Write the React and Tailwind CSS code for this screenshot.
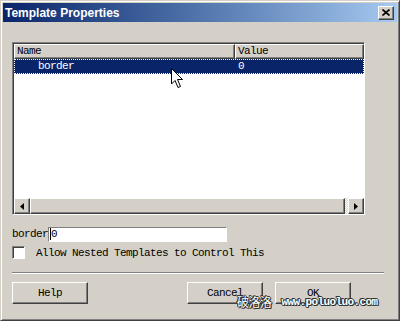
import React from "react";

const mono = "font-['Liberation_Mono','DejaVu_Sans_Mono',monospace] text-[11px] tracking-[-0.6px]";
const raised =
  "bg-[#d4d0c8] border border-t-white border-l-white border-b-[#404040] border-r-[#404040] shadow-[inset_-1px_-1px_0_#808080]";

const Arrow = ({ dir }) => (
  <div className={`w-[16px] h-[16px] flex items-center justify-center ${raised}`}>
    <svg width="4" height="7" viewBox="0 0 4 7">
      {dir === "left" ? <path d="M4 0 L0 3.5 L4 7 Z" fill="#000" /> : <path d="M0 0 L4 3.5 L0 7 Z" fill="#000" />}
    </svg>
  </div>
);

const Button = ({ label, className = "" }) => (
  <button className={`w-[76px] h-[22px] ${raised} ${mono} text-black ${className}`}>{label}</button>
);

export default function App() {
  return (
    <div className="relative w-[400px] h-[321px] bg-[#d4d0c8] border border-t-[#d4d0c8] border-l-[#d4d0c8] border-b-[#404040] border-r-[#404040] shadow-[inset_1px_1px_0_#fff,inset_-1px_-1px_0_#808080] overflow-hidden">
      {/* title bar */}
      <div className="mx-[2px] mt-[2px] h-[19px] flex items-center justify-between bg-gradient-to-r from-[#0a246a] to-[#a6caf0] pl-[2px] pr-[3px]">
        <span className="font-['Liberation_Sans',Arial,sans-serif] font-bold text-[12px] text-white">Template Properties</span>
        <div className={`w-[16px] h-[14px] flex items-center justify-center ${raised}`}>
          <svg width="8" height="7" viewBox="0 0 8 7">
            <path d="M0.5 0.5 L7.5 6.5 M7.5 0.5 L0.5 6.5" stroke="#000" strokeWidth="1.6" />
          </svg>
        </div>
      </div>

      <div className="px-[11px] pt-[20px]">
        {/* list view */}
        <div className="w-[353px] h-[173px] flex flex-col border border-t-[#808080] border-l-[#808080] border-b-white border-r-white shadow-[inset_1px_1px_0_#404040]">
          <div className="flex flex-col flex-1 ml-[1px] mt-[1px] bg-white">
            <div className={`flex h-[15px] ${mono}`}>
              <div className={`w-[221px] pl-[2px] leading-[12px] ${raised}`}>Name</div>
              <div className={`flex-1 pl-[2px] leading-[12px] ${raised}`}>Value</div>
            </div>
            <div className={`flex h-[15px] bg-[#0a246a] text-white outline outline-1 outline-dotted outline-white -outline-offset-1 ${mono}`}>
              <div className="w-[221px] pl-[24px] leading-[14px]">border</div>
              <div className="flex-1 pl-[3px] leading-[14px]">0</div>
            </div>
            <div className="flex-1" />
            <div className="flex h-[16px]">
              <Arrow dir="left" />
              <div className={`flex-1 ${raised}`} />
              <div className="w-[3px] bg-[repeating-conic-gradient(#fff_0_25%,#d4d0c8_0_50%)] bg-[length:2px_2px]" />
              <Arrow dir="right" />
            </div>
          </div>
        </div>

        {/* border field */}
        <div className={`flex items-center mt-[11px] ${mono}`}>
          <span className="w-[36px]">border</span>
          <div className="w-[179px] h-[15px] bg-white border border-t-[#808080] border-l-[#808080] border-b-white border-r-white leading-[13px] pl-[1px]">
            <span className="border-l border-black">0</span>
          </div>
        </div>

        <div className={`flex items-center mt-[2px] ${mono}`}>
          <div className="w-[13px] h-[13px] bg-white border border-t-[#808080] border-l-[#808080] border-b-white border-r-white shadow-[inset_1px_1px_0_#404040]" />
          <span className="ml-[11px]">Allow Nested Templates to Control This</span>
        </div>

        <div className="mt-[11px] w-[372px] h-[2px] border-t border-t-[#808080] border-b border-b-white" />

        <div className="flex mt-[8px]">
          <Button label="Help" />
          <Button label="Cancel" className="ml-[99px]" />
          <Button label="OK" className="ml-[12px]" />
        </div>
      </div>

      {/* mouse cursor */}
      <svg className="absolute left-[170px] top-[67px]" width="14" height="22" viewBox="0 0 14 22">
        <path d="M0.5 0.5 L0.5 16 L4 12.5 L7 19.5 L9.5 18.5 L6.5 11.5 L11.5 11.5 Z" fill="#fff" stroke="#000" strokeWidth="1" />
      </svg>

      {/* watermark */}
      <div className="absolute left-[236px] top-[292px] flex items-center gap-[10px] text-white [text-shadow:1px_0_0_#333,-1px_0_0_#333,0_1px_0_#333,0_-1px_0_#333,1px_1px_0_#333,-1px_-1px_0_#333]">
        <span className="font-['Noto_Sans_CJK_SC',sans-serif] text-[12px] tracking-[-0.5px]">破洛洛</span>
        <span className={`${mono} font-bold`}>www.poluoluo.com</span>
      </div>
    </div>
  );
}
